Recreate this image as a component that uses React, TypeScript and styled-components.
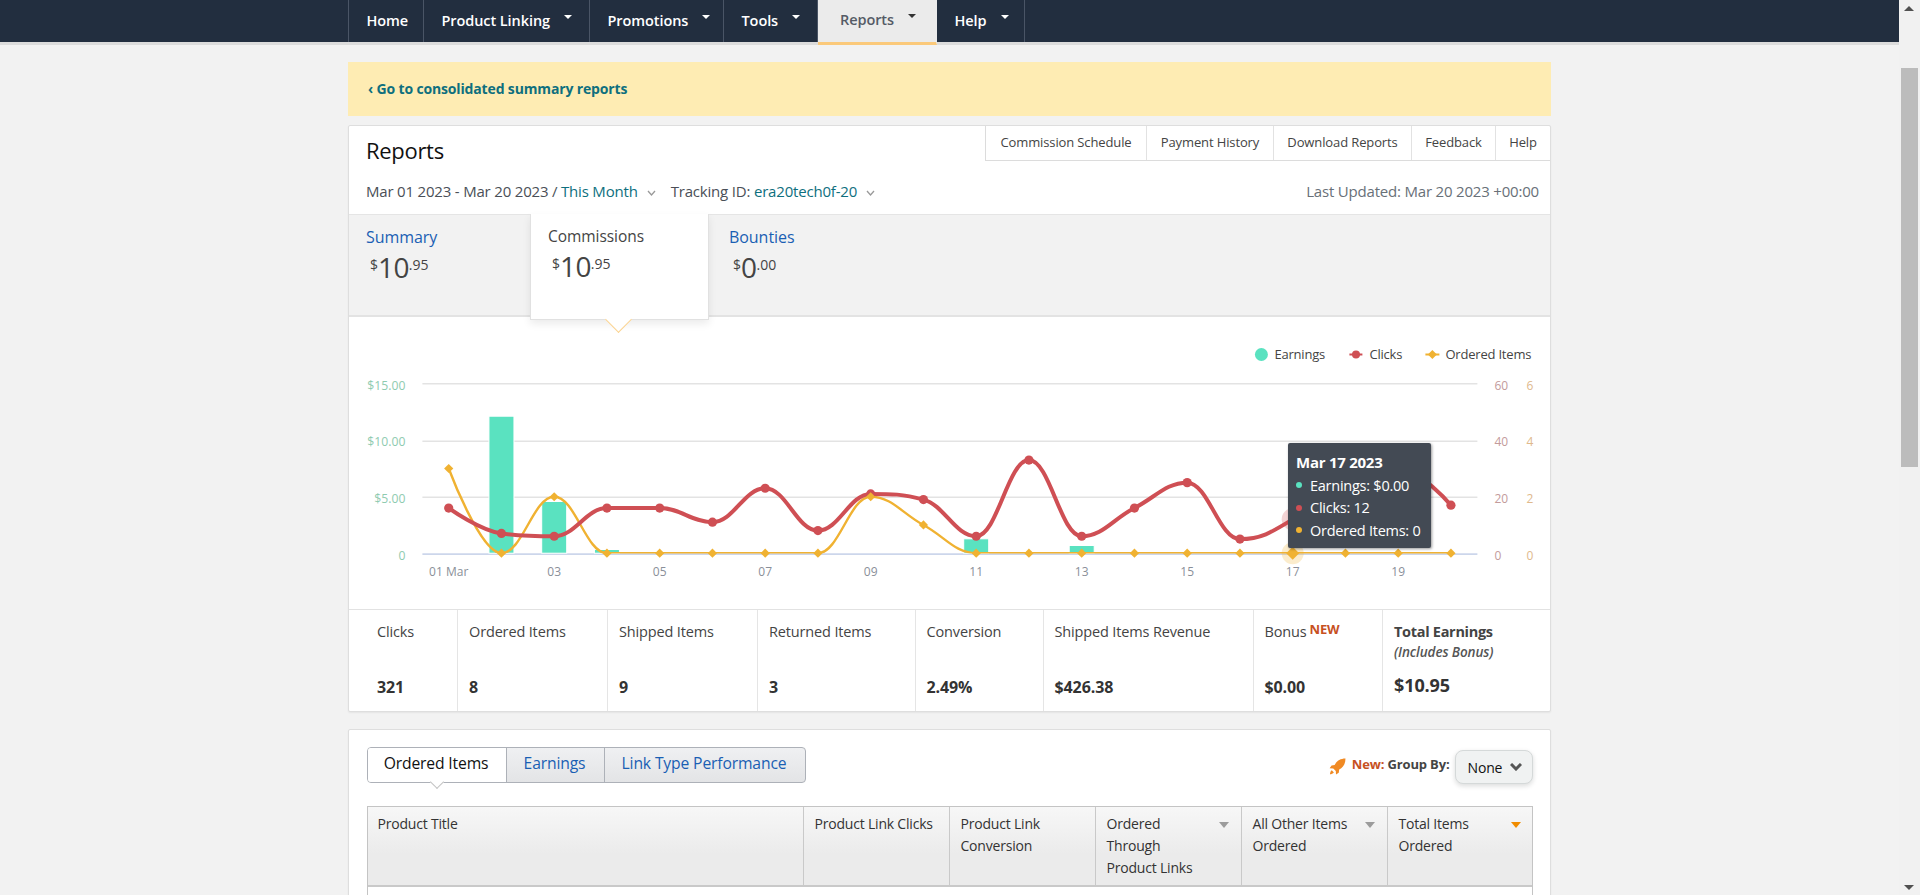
import React from "react";
import styled, { createGlobalStyle } from "styled-components";

const FONT = `"Open Sans", "Noto Sans", "Liberation Sans", sans-serif`;

const Global = createGlobalStyle`
  html, body { margin: 0; padding: 0; height: 100%; overflow: hidden; background: #f2f2f2; }
  body { font-family: ${FONT}; font-size: 14px; color: #333; }
  * { box-sizing: border-box; }
`;

const Viewport = styled.div`
  width: 1899px;
  height: 895px;
  overflow: hidden;
`;

const NavBar = styled.nav`
  height: 42px;
  background: #222e3f;
  box-shadow: 0 3px 0 #dcdcdc;
`;
const NavInner = styled.div`
  width: 1203px;
  margin: 0 auto;
  height: 42px;
  display: flex;
  border-left: 1px solid #4a5566;
`;
const NavItem = styled.div<{ $w: number; $active?: boolean }>`
  width: ${(p) => p.$w}px;
  height: ${(p) => (p.$active ? 45 : 42)}px;
  padding-left: ${(p) => (p.$active ? 22 : 17.5)}px;
  padding-bottom: ${(p) => (p.$active ? 0 : 2)}px;
  display: flex;
  align-items: ${(p) => (p.$active ? "flex-start" : "center")};
  padding-top: ${(p) => (p.$active ? "10px" : "0")};
  gap: 14px;
  font-size: 14.5px;
  line-height: 19px;
  font-weight: 600;
  letter-spacing: -0.08px;
  color: ${(p) => (p.$active ? "#555b66" : "#fff")};
  background: ${(p) => (p.$active ? "#ebebeb" : "transparent")};
  border-right: 1px solid ${(p) => (p.$active ? "#ebebeb" : "#4a5566")};
  border-bottom: ${(p) => (p.$active ? "3px solid #fbc97a" : "none")};
  position: relative;
`;
const NavCaret = styled.span<{ $dark?: boolean }>`
  width: 0;
  height: 0;
  margin-top: ${(p) => (p.$dark ? "4px" : "-6px")};
  border-left: 4px solid transparent;
  border-right: 4px solid transparent;
  border-top: 4px solid ${(p) => (p.$dark ? "#333" : "#fff")};
`;

const Container = styled.main`
  width: 1203px;
  margin: 20px auto 0;
`;

const Banner = styled.div`
  height: 54px;
  background: #feecb3;
  display: flex;
  align-items: center;
  padding: 0 0 2px 20px;
  font-size: 14px;
  font-weight: 700;
  letter-spacing: -0.15px;
  color: #0e6f7e;
`;

const Card = styled.section`
  margin-top: 9px;
  background: #fff;
  border: 1px solid #dedede;
  border-radius: 2px;
  box-shadow: 0 1px 2px rgba(0, 0, 0, 0.06);
`;

const HeadTop = styled.div`
  display: flex;
  justify-content: space-between;
  height: 35px;
`;
const Title = styled.h1`
  margin: 0;
  padding: 9px 0 0 17px;
  font-size: 22px;
  line-height: 30px;
  font-weight: 400;
  letter-spacing: -0.3px;
  color: #111;
`;
const TopLinks = styled.div`
  display: flex;
  border-left: 1px solid #dcdcdc;
  border-bottom: 1px solid #dcdcdc;
`;
const TopLink = styled.div<{ $w: number }>`
  width: ${(p) => p.$w}px;
  display: flex;
  align-items: center;
  justify-content: center;
  padding-bottom: 2px;
  font-size: 13px;
  letter-spacing: -0.12px;
  color: #444;
  & + & { border-left: 1px solid #e2e2e2; }
`;
const MetaRow = styled.div`
  height: 53px;
  padding: 20px 11px 0 17px;
  display: flex;
  align-items: flex-start;
  font-size: 15px;
  line-height: 20px;
  letter-spacing: -0.19px;
  color: #4a4f57;
`;
const MetaLink = styled.span`
  color: #0e6f7e;
`;
const Chevron = styled.svg`
  width: 9px;
  height: 6px;
  margin: 9px 15px 0 9px;
  fill: none;
  stroke: #999;
  stroke-width: 1.3;
`;
const Updated = styled.span`
  margin-left: auto;
  color: #687078;
`;

const SummaryTabs = styled.div`
  height: 103px;
  display: flex;
  background: #f2f2f2;
  border-top: 1px solid #e5e5e5;
  border-bottom: 2px solid #e3e3e3;
`;
const SumTab = styled.div<{ $w: number; $active?: boolean; $pad: number }>`
  width: ${(p) => p.$w}px;
  padding: 10px 0 0 ${(p) => p.$pad}px;
  position: relative;
  ${(p) =>
    p.$active &&
    `
    height: 106px;
    margin-top: -1px;
    background: #fff;
    border: 1px solid #e1e1e1;
    border-top: none;
    box-shadow: 0 4px 8px rgba(0,0,0,0.08);
    z-index: 2;
    &::after {
      content: "";
      position: absolute;
      left: 78px;
      bottom: -10px;
      width: 18px;
      height: 18px;
      background: #fff;
      border-right: 1px solid #fbd390;
      border-bottom: 1px solid #fbd390;
      transform: rotate(45deg);
      z-index: -1;
    }
  `}
`;
const SumLabel = styled.div<{ $link?: boolean }>`
  font-size: ${(p) => (p.$link ? 16 : 15.5)}px;
  line-height: 24px;
  letter-spacing: -0.05px;
  color: ${(p) => (p.$link ? "#1a5fb4" : "#444")};
`;
const Price = styled.div`
  margin: 1px 0 0 4px;
  color: #444;
  font-size: 28px;
  line-height: 34px;
  letter-spacing: -0.6px;
`;
const Sup = styled.sup`
  font-size: 14px;
  vertical-align: 8px;
  line-height: 0;
  letter-spacing: 0;
`;

const ChartPanel = styled.div`
  position: relative;
  height: 293px;
  border-bottom: 1px solid #e2e2e2;
`;
const ChartSvg = styled.svg`
  display: block;
  width: 1201px;
  height: 292px;
  font-family: ${FONT};
`;
const Tooltip = styled.div`
  position: absolute;
  left: 939px;
  top: 126px;
  width: 143px;
  height: 105px;
  padding: 8px 8px;
  background: #434a54;
  border-radius: 2px;
  box-shadow: 1px 1px 3px rgba(0, 0, 0, 0.4);
  color: #fff;
  font-size: 14.5px;
  letter-spacing: -0.25px;
`;
const TipTitle = styled.div`
  font-weight: 700;
  font-size: 15px;
  line-height: 22px;
  margin-bottom: 1px;
`;
const TipRow = styled.div`
  display: flex;
  align-items: center;
  gap: 8px;
  height: 22.5px;
  white-space: nowrap;
`;
const TipDot = styled.span<{ $c: string }>`
  width: 6px;
  height: 6px;
  border-radius: 50%;
  background: ${(p) => p.$c};
`;

const Stats = styled.div`
  display: grid;
  grid-template-columns: 108px 150px 150px 157.5px 128px 210px 129.5px 1fr;
  height: 101px;
`;
const Stat = styled.div`
  position: relative;
  padding: 12px 0 0 11px;
  border-left: 1px solid #e5e5e5;
  color: #444;
  font-size: 14.5px;
  line-height: 20px;
  letter-spacing: -0.15px;
  &:first-child { border-left: none; padding-left: 28px; }
`;
const StatValue = styled.div<{ $big?: boolean }>`
  position: absolute;
  left: inherit;
  top: ${(p) => (p.$big ? 64 : 66)}px;
  font-size: ${(p) => (p.$big ? 18 : 16)}px;
  line-height: 22px;
  font-weight: 700;
  letter-spacing: -0.1px;
  color: #333;
`;
const NewTag = styled.span`
  margin-left: 3px;
  font-size: 13px;
  line-height: 0;
  vertical-align: 3px;
  font-weight: 700;
  color: #c7511f;
`;
const StatBold = styled.div`
  font-weight: 700;
  letter-spacing: -0.3px;
`;
const StatNote = styled.div`
  font-size: 13.5px;
  font-style: italic;
  font-weight: 600;
  letter-spacing: -0.1px;
  color: #555;
`;

const TableCard = styled(Card)`
  margin-top: 17px;
  padding: 17px 17.5px 0;
  height: 200px;
`;
const ToolRow = styled.div`
  display: flex;
  justify-content: space-between;
  height: 59px;
`;
const Segments = styled.div`
  display: flex;
  height: 36px;
  border: 1px solid #adb1b8;
  border-radius: 4px;
  background: linear-gradient(#eff0f2, #e3e4e6);
`;
const Segment = styled.div<{ $w: number; $active?: boolean }>`
  width: ${(p) => p.$w}px;
  display: flex;
  align-items: center;
  justify-content: center;
  padding: 0 1px 4px 0;
  font-size: 15.7px;
  letter-spacing: -0.15px;
  position: relative;
  color: ${(p) => (p.$active ? "#111" : "#1a5fb4")};
  background: ${(p) => (p.$active ? "#fff" : "transparent")};
  border-radius: ${(p) => (p.$active ? "3px 0 0 3px" : "0")};
  & + & { border-left: 1px solid #adb1b8; }
  ${(p) =>
    p.$active &&
    `
    &::after {
      content: "";
      position: absolute;
      left: 64px;
      bottom: -5px;
      width: 9px;
      height: 9px;
      background: #fff;
      border-right: 1px solid #c4c4c4;
      border-bottom: 1px solid #c4c4c4;
      transform: rotate(45deg);
    }
  `}
`;
const GroupBy = styled.div`
  display: flex;
  align-items: flex-start;
  font-size: 13px;
  font-weight: 700;
  letter-spacing: -0.15px;
  color: #444;
  padding-top: 3px;
`;
const GroupText = styled.span`
  line-height: 29px;
  margin-right: 5px;
`;
const NewWord = styled.span`
  color: #c7511f;
`;
const Rocket = styled.svg`
  width: 17px;
  height: 17px;
  margin: 8px 6px 0 0;
  fill: #f08a24;
`;
const Select = styled.div`
  width: 78px;
  height: 34px;
  padding: 0 10px 0 12px;
  display: flex;
  align-items: center;
  justify-content: space-between;
  border: 1px solid #d5d9d9;
  border-radius: 8px;
  background: #f0f2f2;
  box-shadow: 0 2px 5px rgba(15, 17, 17, 0.15);
  font-weight: 400;
  font-size: 14px;
  color: #111;
`;
const SelectChevron = styled.svg`
  width: 12px;
  height: 8px;
  fill: none;
  stroke: #555;
  stroke-width: 3;
`;

const Table = styled.div`
  display: grid;
  grid-template-columns: 435px 146px 146px 146px 146px 1fr;
  border: 1px solid #c4c4c4;
  border-bottom: none;
  height: 120px;
`;
const Th = styled.div`
  position: relative;
  height: 80px;
  padding: 6px 10px 0 11px;
  font-size: 14px;
  line-height: 22px;
  letter-spacing: -0.2px;
  color: #333;
  background: linear-gradient(#f7f7f7, #ebebeb 60%);
  border-bottom: 2px solid #c9c9c9;
  &:first-child { padding-left: 10px; }
  & + & { border-left: 1px solid #c9c9c9; }
`;
const Td = styled.div`
  background: #fff;
  & + & { border-left: 1px solid #c9c9c9; }
`;
const SortMark = styled.span<{ $active?: boolean }>`
  position: absolute;
  top: 15px;
  right: ${(p) => (p.$active ? 11 : 12)}px;
  border-left: 5px solid transparent;
  border-right: 5px solid transparent;
  border-top: 6px solid ${(p) => (p.$active ? "#f08c00" : "#9c9c9c")};
`;

const Scrollbar = styled.div`
  position: fixed;
  right: 0;
  top: 0;
  bottom: 0;
  width: 21px;
  background: #f1f1f1;
`;
const ScrollThumb = styled.div`
  position: absolute;
  left: 2px;
  right: 2px;
  top: 68px;
  height: 399px;
  background: #bcbcbc;
`;
const ScrollArrow = styled.span<{ $down?: boolean }>`
  position: absolute;
  left: 5px;
  ${(p) => (p.$down ? "bottom: 5px;" : "top: 6px;")}
  border-left: 5px solid transparent;
  border-right: 5px solid transparent;
  ${(p) => (p.$down ? "border-top: 5px solid #505050;" : "border-bottom: 5px solid #505050;")}
`;

/* ---- chart drawing; coordinates are page pixels, the view box shifts them ---- */
const X0 = 448.3;
const STEP = 52.75;
const BASE = 552.7;
const clicks = [16, 7, 6, 16, 16, 11, 23, 8, 21, 19, 6, 33, 6, 16, 25, 5, 12, 28, 30, 17];
const ordered = [3, 0, 2, 0, 0, 0, 0, 0, 2, 1, 0, 0, 0, 0, 0, 0, 0, 0, 0, 0];
const earnings: [number, number][] = [[1, 137], [2, 51.7], [3, 3.7], [10, 14.4], [12, 7.7]];
const xAt = (i: number) => X0 + STEP * i;
const clickPts = clicks.map((v, i) => [xAt(i), BASE - v * 2.823]);
const orderPts = ordered.map((v, i) => [xAt(i), BASE - v * 28.23]);

function spline(pts: number[][]): string {
  const S = 1.5;
  const cont = pts.map((p, i) => {
    const a = pts[i - 1];
    const b = pts[i + 1];
    if (!a || !b) return { lx: p[0], ly: p[1], rx: p[0], ry: p[1] };
    const lx = (S * p[0] + a[0]) / (S + 1);
    let ly = (S * p[1] + a[1]) / (S + 1);
    const rx = (S * p[0] + b[0]) / (S + 1);
    let ry = (S * p[1] + b[1]) / (S + 1);
    const c = ((ry - ly) * (rx - p[0])) / (rx - lx) + p[1] - ry;
    ly += c;
    ry += c;
    if (ly > a[1] && ly > p[1]) { ly = Math.max(a[1], p[1]); ry = 2 * p[1] - ly; }
    else if (ly < a[1] && ly < p[1]) { ly = Math.min(a[1], p[1]); ry = 2 * p[1] - ly; }
    if (ry > b[1] && ry > p[1]) { ry = Math.max(b[1], p[1]); ly = 2 * p[1] - ry; }
    else if (ry < b[1] && ry < p[1]) { ry = Math.min(b[1], p[1]); ly = 2 * p[1] - ry; }
    return { lx, ly, rx, ry };
  });
  let d = `M${pts[0][0]} ${pts[0][1]}`;
  for (let i = 1; i < pts.length; i++) {
    d += ` C${cont[i - 1].rx} ${cont[i - 1].ry} ${cont[i].lx} ${cont[i].ly} ${pts[i][0]} ${pts[i][1]}`;
  }
  return d;
}

const diamond = (x: number, y: number, r: number) =>
  `M${x} ${y - r} L${x + r} ${y} L${x} ${y + r} L${x - r} ${y} Z`;

const RED = "#cf4f54";
const GOLD = "#f0b232";
const TEAL = "#5ae2c0";

function Chart() {
  return (
    <ChartSvg viewBox="348.6 316.5 1201 292">
      <defs>
        <clipPath id="plot"><rect x="422" y="370" width="1055" height={BASE + 0.3 - 370} /></clipPath>
      </defs>
      {[383.3, 440.7, 496.7].map((y) => (
        <line key={y} x1="422" x2="1477" y1={y} y2={y} stroke="#e3e3e3" strokeWidth="1.6" />
      ))}
      <line x1="422" x2="1477" y1={BASE + 0.9} y2={BASE + 0.9} stroke="#ccd6eb" strokeWidth="1.6" />
      {earnings.map(([i, h]) => (
        <rect key={i} x={xAt(i) - 12.5} y={BASE - h} width="25" height={h} fill={TEAL} stroke="#fff" strokeWidth="1" />
      ))}
      <path d={spline(orderPts)} fill="none" stroke={GOLD} strokeWidth="2.4" clipPath="url(#plot)" />
      <path d={spline(clickPts)} fill="none" stroke={RED} strokeWidth="4" />
      <circle cx={xAt(16)} cy={clickPts[16][1]} r="11" fill={RED} opacity="0.25" />
      <circle cx={xAt(16)} cy={BASE} r="11" fill={GOLD} opacity="0.25" />
      {clickPts.map(([x, y], i) => (
        <circle key={i} cx={x} cy={y} r="4.6" fill={RED} />
      ))}
      {orderPts.map(([x, y], i) => (
        <path key={i} d={diamond(x, y, i === 16 ? 6.5 : 4.6)} fill={GOLD} />
      ))}

      {[["$15.00", 389.5], ["$10.00", 445.5], ["$5.00", 502], ["0", 559]].map(([t, y]) => (
        <text key={t} x="405" y={y} textAnchor="end" fontSize="12.2" fill="#8fcbb0">{t}</text>
      ))}
      {[["60", 389.5], ["40", 445.5], ["20", 502], ["0", 559]].map(([t, y]) => (
        <text key={String(t) + "r"} x="1494" y={y} fontSize="12" fill="#c39b9b">{t}</text>
      ))}
      {[["6", 389.5], ["4", 445.5], ["2", 502], ["0", 559]].map(([t, y]) => (
        <text key={String(t) + "o"} x="1526" y={y} fontSize="12" fill="#e0b98c">{t}</text>
      ))}
      {[["01 Mar", 0], ["03", 2], ["05", 4], ["07", 6], ["09", 8], ["11", 10], ["13", 12], ["15", 14], ["17", 16], ["19", 18]].map(([t, i]) => (
        <text key={t as string} x={xAt(i as number)} y="575" textAnchor="middle" fontSize="12" fill="#8a8f99">{t}</text>
      ))}

      <circle cx="1261" cy="354" r="6.5" fill={TEAL} />
      <text x="1274" y="358.5" fontSize="13" letterSpacing="-0.2" fill="#444">Earnings</text>
      <line x1="1349" x2="1362" y1="354" y2="354" stroke={RED} strokeWidth="2" />
      <circle cx="1355.6" cy="354" r="4" fill={RED} />
      <text x="1369" y="358.5" fontSize="13" letterSpacing="-0.2" fill="#444">Clicks</text>
      <line x1="1425" x2="1439" y1="354" y2="354" stroke={GOLD} strokeWidth="2" />
      <path d={diamond(1432, 354, 4.5)} fill={GOLD} />
      <text x="1445" y="358.5" fontSize="13" letterSpacing="-0.2" fill="#444">Ordered Items</text>
    </ChartSvg>
  );
}

const ThinChevron = () => (
  <Chevron viewBox="0 0 9 6"><polyline points="1,1 4.5,5 8,1" /></Chevron>
);

function Dollars({ whole, cents }: { whole: string; cents: string }) {
  return (
    <Price>
      <Sup>$</Sup>
      {whole}
      <Sup>.{cents}</Sup>
    </Price>
  );
}

export default function App() {
  return (
    <Viewport>
      <Global />
      <NavBar>
        <NavInner>
          <NavItem $w={75}>Home</NavItem>
          <NavItem $w={166}>Product Linking<NavCaret /></NavItem>
          <NavItem $w={134}>Promotions<NavCaret /></NavItem>
          <NavItem $w={94}>Tools<NavCaret /></NavItem>
          <NavItem $w={119} $active>Reports<NavCaret $dark /></NavItem>
          <NavItem $w={88}>Help<NavCaret /></NavItem>
        </NavInner>
      </NavBar>

      <Container>
        <Banner>‹ Go to consolidated summary reports</Banner>

        <Card>
          <HeadTop>
            <Title>Reports</Title>
            <TopLinks>
              <TopLink $w={160}>Commission Schedule</TopLink>
              <TopLink $w={127}>Payment History</TopLink>
              <TopLink $w={138}>Download Reports</TopLink>
              <TopLink $w={84}>Feedback</TopLink>
              <TopLink $w={55}>Help</TopLink>
            </TopLinks>
          </HeadTop>
          <MetaRow>
            <span>Mar 01 2023 - Mar 20 2023 / <MetaLink>This Month</MetaLink></span>
            <ThinChevron />
            <span>Tracking ID: <MetaLink>era20tech0f-20</MetaLink></span>
            <ThinChevron />
            <Updated>Last Updated: Mar 20 2023 +00:00</Updated>
          </MetaRow>

          <SummaryTabs>
            <SumTab $w={181} $pad={17}>
              <SumLabel $link>Summary</SumLabel>
              <Dollars whole="10" cents="95" />
            </SumTab>
            <SumTab $w={179} $pad={17} $active>
              <SumLabel>Commissions</SumLabel>
              <Dollars whole="10" cents="95" />
            </SumTab>
            <SumTab $w={201} $pad={20}>
              <SumLabel $link>Bounties</SumLabel>
              <Dollars whole="0" cents="00" />
            </SumTab>
          </SummaryTabs>

          <ChartPanel>
            <Chart />
            <Tooltip>
              <TipTitle>Mar 17 2023</TipTitle>
              <TipRow><TipDot $c={TEAL} />Earnings: $0.00</TipRow>
              <TipRow><TipDot $c={RED} />Clicks: 12</TipRow>
              <TipRow><TipDot $c={GOLD} />Ordered Items: 0</TipRow>
            </Tooltip>
          </ChartPanel>

          <Stats>
            <Stat>Clicks<StatValue>321</StatValue></Stat>
            <Stat>Ordered Items<StatValue>8</StatValue></Stat>
            <Stat>Shipped Items<StatValue>9</StatValue></Stat>
            <Stat>Returned Items<StatValue>3</StatValue></Stat>
            <Stat>Conversion<StatValue>2.49%</StatValue></Stat>
            <Stat>Shipped Items Revenue<StatValue>$426.38</StatValue></Stat>
            <Stat>Bonus<NewTag>NEW</NewTag><StatValue>$0.00</StatValue></Stat>
            <Stat>
              <StatBold>Total Earnings</StatBold>
              <StatNote>(Includes Bonus)</StatNote>
              <StatValue $big>$10.95</StatValue>
            </Stat>
          </Stats>
        </Card>

        <TableCard>
          <ToolRow>
            <Segments>
              <Segment $w={138} $active>Ordered Items</Segment>
              <Segment $w={98}>Earnings</Segment>
              <Segment $w={201}>Link Type Performance</Segment>
            </Segments>
            <GroupBy>
              <Rocket viewBox="0 0 16 16">
                <path d="M15.5 0.5C10.5 0.5 7 3 5.3 6.6L2.4 7 0.6 9.6 4 9.8 6.4 12.2 6.6 15.6 9.2 13.8 9.6 10.9C13.2 9.2 15.5 5.6 15.5 0.5Z" />
                <path d="M2.6 11.6C1.4 12.6 1 14 0.9 15.3 2.2 15.2 3.6 14.8 4.6 13.6Z" />
              </Rocket>
              <GroupText><NewWord>New:</NewWord> Group By:</GroupText>
              <Select>
                None
                <SelectChevron viewBox="0 0 12 8"><polyline points="1,1 6,6 11,1" /></SelectChevron>
              </Select>
            </GroupBy>
          </ToolRow>
          <Table>
            <Th>Product Title</Th>
            <Th>Product Link Clicks</Th>
            <Th>Product Link<br />Conversion</Th>
            <Th>Ordered<br />Through<br />Product Links<SortMark /></Th>
            <Th>All Other Items<br />Ordered<SortMark /></Th>
            <Th>Total Items<br />Ordered<SortMark $active /></Th>
            <Td /><Td /><Td /><Td /><Td /><Td />
          </Table>
        </TableCard>
      </Container>

      <Scrollbar>
        <ScrollArrow />
        <ScrollThumb />
        <ScrollArrow $down />
      </Scrollbar>
    </Viewport>
  );
}
